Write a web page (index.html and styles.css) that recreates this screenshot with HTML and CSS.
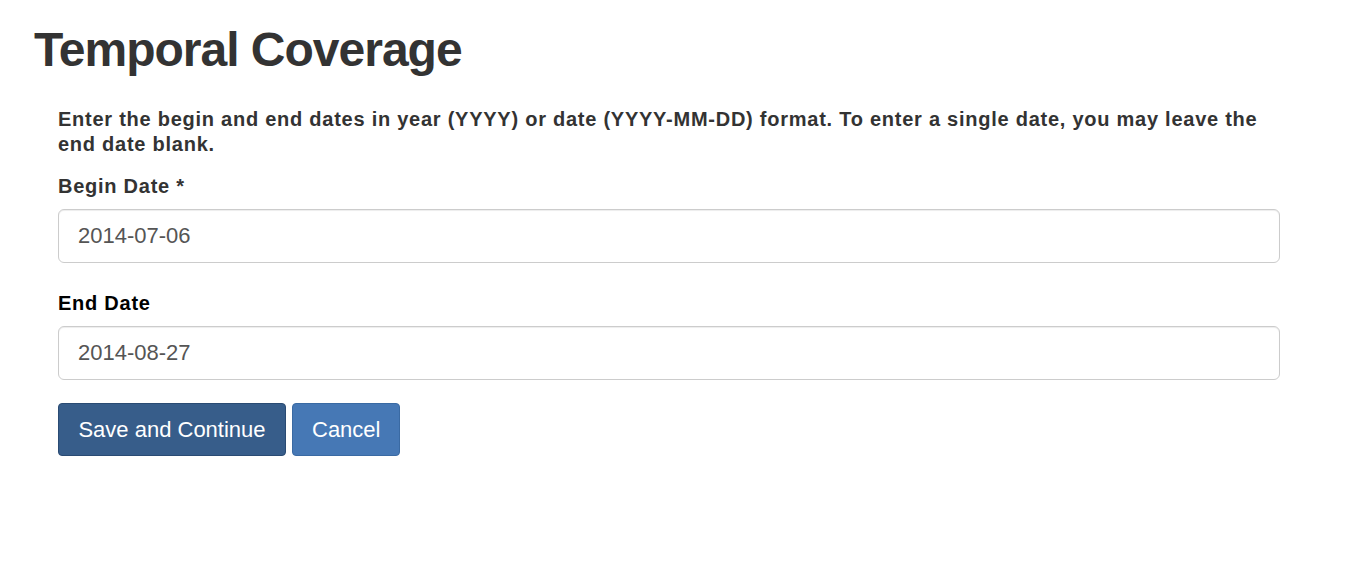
FILE: index.html
```html
<!DOCTYPE html>
<html>
<head>
<meta charset="utf-8">
<link rel="stylesheet" href="styles.css">
</head>
<body>
<div class="page">
  <h1 class="title">Temporal Coverage</h1>
  <form class="form">
    <p class="help">Enter the begin and end dates in year (YYYY) or date (YYYY-MM-DD) format. To enter a single date, you may leave the end date blank.</p>
    <div class="group">
      <label class="label">Begin Date *</label>
      <input class="input" type="text" value="2014-07-06">
    </div>
    <div class="group">
      <label class="label label-dark">End Date</label>
      <input class="input" type="text" value="2014-08-27">
    </div>
    <div class="actions">
      <button type="button" class="btn btn-save">Save and Continue</button>
      <button type="button" class="btn btn-cancel">Cancel</button>
    </div>
  </form>
</div>
</body>
</html>
```

FILE: styles.css
```css
* { box-sizing: border-box; }
html, body { margin: 0; padding: 0; background: #fff; }
body {
  font-family: "Liberation Sans", Arial, sans-serif;
  color: #333;
}
.page { padding: 0 34px; }
.title {
  margin: 0;
  padding-top: 23px;
  font-size: 48px;
  line-height: 54px;
  letter-spacing: -1px;
  font-weight: bold;
  color: #333;
}
.form {
  padding: 30px 42px 0 24px;
}
.help {
  margin: 0 0 17px;
  font-size: 20px;
  line-height: 25px;
  letter-spacing: 0.75px;
  font-weight: bold;
}
.group { display: flex; flex-direction: column; margin-bottom: 28px; }
.label {
  font-size: 20px;
  line-height: 25px;
  letter-spacing: 0.75px;
  font-weight: bold;
  color: #333;
  margin-bottom: 10px;
}
.label-dark { color: #000; }
.input {
  height: 54px;
  border: 1px solid #ccc;
  border-radius: 6px;
  padding: 0 19px;
  font-family: "Liberation Sans", Arial, sans-serif;
  font-size: 22px;
  color: #555;
  background: #fff;
  box-shadow: inset 0 1px 1px rgba(0,0,0,0.075);
}
.actions { display: flex; gap: 6px; margin-top: -5px; }
.btn {
  height: 53px;
  padding: 0 19px;
  border-radius: 4px;
  font-family: "Liberation Sans", Arial, sans-serif;
  font-size: 22px;
  color: #fff;
  cursor: pointer;
}
.btn-save { background: #375d8a; border: 1px solid #2a4b73; min-width: 228px; }
.btn-cancel { background: #4678b5; border: 1px solid #3a6aa3; min-width: 108px; }
```
